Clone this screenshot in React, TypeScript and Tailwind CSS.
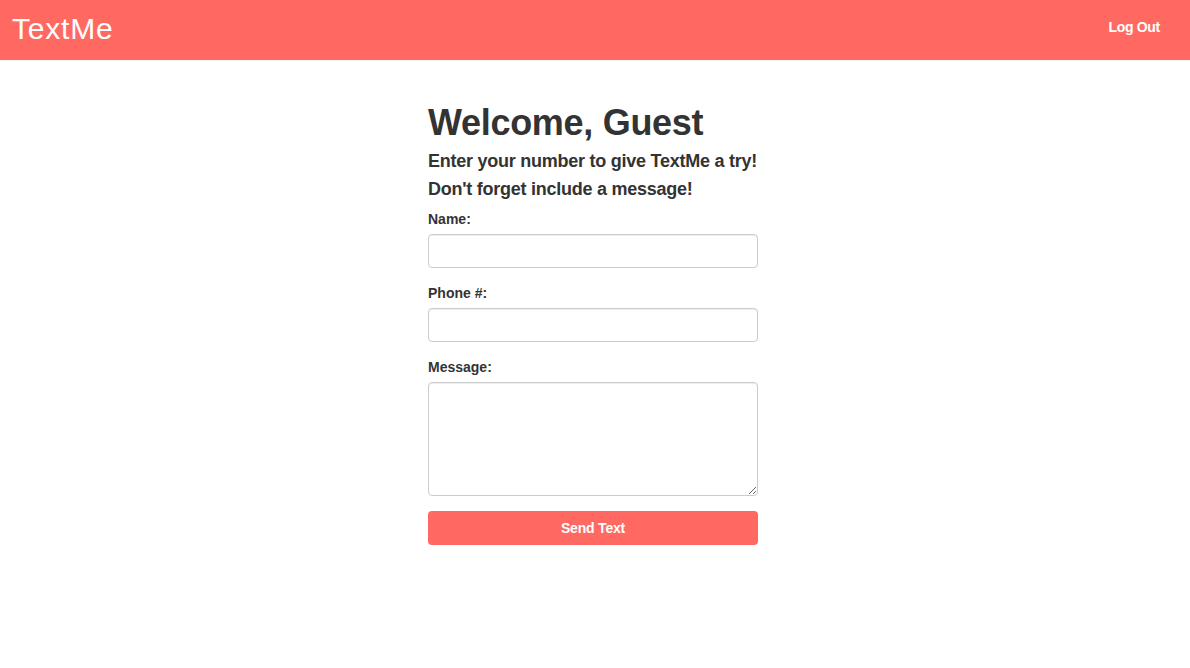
import React from "react";

export default function App() {
  return (
    <div className="min-h-[668px] bg-white text-[#333333]" style={{ fontFamily: '"Liberation Sans", Arial, sans-serif' }}>
      <nav className="h-[61px] bg-[#ff6961] border-b border-[#f3f3f3] flex items-center justify-between">
        <div className="pl-[12px] text-[30px] leading-none text-white tracking-[0.8px] pb-[2px]">TextMe</div>
        <a className="pr-[30px] text-[14px] font-bold text-white tracking-[-0.3px] pb-[5px]">Log Out</a>
      </nav>
      <main className="flex justify-center pr-[4px]">
        <div className="w-[330px] pt-[42px]">
          <h1 className="text-[36px] leading-[40px] font-bold tracking-[-0.3px] text-[#333]">Welcome, Guest</h1>
          <div className="mt-[4px] text-[18px] leading-[28px] font-bold tracking-[-0.25px]">
            <p>Enter your number to give TextMe a try!</p>
            <p>Don't forget include a message!</p>
          </div>
          <form className="mt-[6px]" onSubmit={(e) => e.preventDefault()}>
            <div className="mb-[15px]">
              <label className="block text-[14px] leading-[20px] font-bold mb-[5px]">Name:</label>
              <input className="block w-full h-[34px] rounded-[4px] border border-[#cccccc] shadow-[inset_0_1px_1px_rgba(0,0,0,0.075)] px-3" />
            </div>
            <div className="mb-[15px]">
              <label className="block text-[14px] leading-[20px] font-bold mb-[5px]">Phone #:</label>
              <input className="block w-full h-[34px] rounded-[4px] border border-[#cccccc] shadow-[inset_0_1px_1px_rgba(0,0,0,0.075)] px-3" />
            </div>
            <div className="mb-[15px]">
              <label className="block text-[14px] leading-[20px] font-bold mb-[5px]">Message:</label>
              <textarea className="block w-full h-[114px] rounded-[4px] border border-[#cccccc] shadow-[inset_0_1px_1px_rgba(0,0,0,0.075)] px-3" />
            </div>
            <button type="submit" className="block w-full h-[34px] rounded-[4px] bg-[#ff6961] text-white text-[14px] font-bold tracking-[-0.2px]">
              Send Text
            </button>
          </form>
        </div>
      </main>
    </div>
  );
}
